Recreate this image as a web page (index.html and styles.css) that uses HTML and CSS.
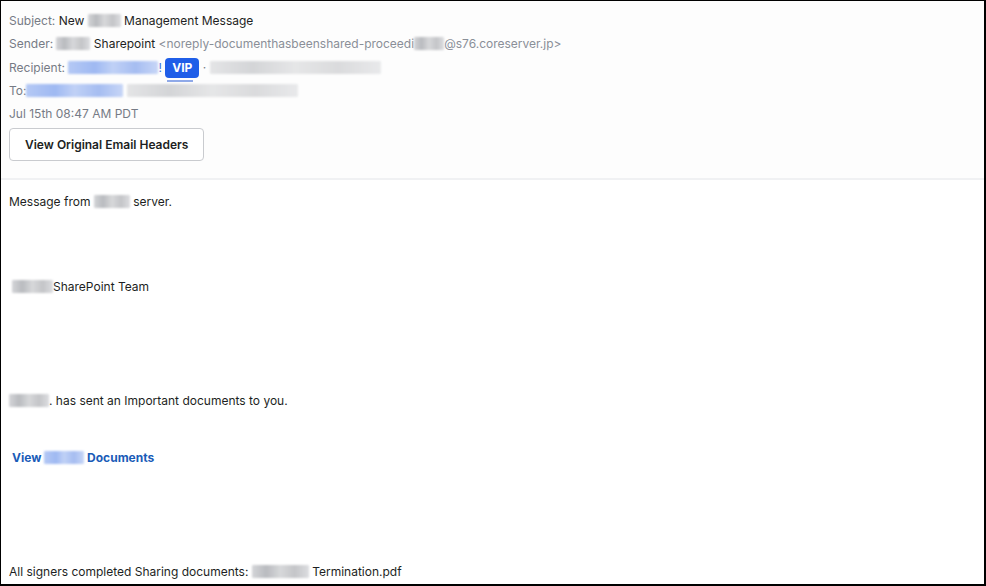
FILE: index.html
```html
<!DOCTYPE html>
<html>
<head>
<meta charset="utf-8">
<link rel="stylesheet" href="styles.css">
</head>
<body>
<div class="frame">
  <header class="head">
    <div class="row"><span class="lbl">Subject:</span> <span class="val">New</span> <span class="blur g w33"></span> <span class="val">Management Message</span></div>
    <div class="row"><span class="lbl">Sender:</span> <span class="blur g w34"></span> <span class="val">Sharepoint</span> <span class="addr">&lt;noreply-documenthasbeenshared-proceedi<span class="blur g w30 tight"></span>@s76.coreserver.jp&gt;</span></div>
    <div class="row"><span class="lbl">Recipient:</span> <span class="blur b w90"></span><span class="bang">!</span> <span class="vip">VIP</span> <span class="lbl">·</span> <span class="blur g w171"></span></div>
    <div class="row"><span class="lbl">To:</span><span class="blur b w97"></span> <span class="blur g w171"></span></div>
    <div class="row"><span class="lbl">Jul 15th 08:47 AM PDT</span></div>
    <button class="btn">View Original Email Headers</button>
  </header>
  <main class="body">
    <div class="line">Message from <span class="blur g w36"></span> server.</div>
    <div class="line s3 ind"><span class="blur g w41 tight"></span>SharePoint Team</div>
    <div class="line s4"><span class="blur g w40 tight"></span>. has sent an Important documents to you.</div>
    <div class="line s2 ind"><a class="link">View <span class="blur b w40 tight"></span> Documents</a></div>
    <div class="line s4">All signers completed Sharing documents: <span class="blur g w57"></span> Termination.pdf</div>
  </main>
</div>
</body>
</html>
```

FILE: styles.css
```css
* { box-sizing: border-box; }
html, body { margin: 0; padding: 0; }
body {
  width: 986px;
  height: 586px;
  font-family: Inter, "Noto Sans", sans-serif;
  font-size: 12px;
  color: #1d1f23;
  background: #fff;
  overflow: hidden;
}
.frame {
  width: 986px;
  height: 586px;
  border-top: 1px solid #000;
  border-left: 1px solid #000;
  border-right: 2px solid #000;
  border-bottom: 2px solid #000;
  display: flex;
  flex-direction: column;
}
.head {
  background: #fdfdfd;
  padding: 8px 8px 17px;
  border-bottom: 2px solid #f0f1f3;
}
.row {
  height: 23.3px;
  line-height: 23.3px;
  white-space: nowrap;
}
.lbl { color: #767b85; }
.val { color: #1d1f23; }
.addr { color: #8a8f98; }
.bang { color: #3b6fe0; }
.blur {
  display: inline-block;
  height: 13px;
  vertical-align: -2px;
  filter: blur(1.2px);
  border-radius: 1px;
}
.blur.tight { margin: 0; }
.g { background: linear-gradient(90deg, #d4d5d8 0%, #b9bbbf 25%, #d7d8da 50%, #c4c5c8 75%, #dcdde0 100%); }
.b { background: linear-gradient(90deg, #b5c9f5 0%, #9fb9f2 30%, #c0d1f6 50%, #a6bdf1 75%, #c7d6f7 100%); }
.w30 { width: 30px; }
.w33 { width: 33px; }
.w34 { width: 34px; }
.w36 { width: 36px; }
.w40 { width: 40px; }
.w41 { width: 41px; }
.w57 { width: 57px; }
.w90 { width: 90px; }
.w97 { width: 97px; }
.w171 { width: 171px; opacity: 0.6; }
.vip {
  display: inline-block;
  position: relative;
  background: #1f5ee8;
  color: #fff;
  font-weight: 700;
  font-size: 12px;
  line-height: 20px;
  padding: 0 7px;
  border-radius: 4px;
  vertical-align: 0;
}
.vip::after {
  content: "";
  position: absolute;
  left: 2px;
  right: 6px;
  bottom: -4px;
  height: 2px;
  background: #8fa9e8;
  filter: blur(0.5px);
}
.btn {
  display: block;
  margin-top: 3px;
  height: 33px;
  padding: 0 15px;
  font-family: Inter, "Noto Sans", sans-serif;
  font-size: 12px;
  font-weight: 600;
  color: #1d1f23;
  background: #fff;
  border: 1px solid #c9cbcf;
  border-radius: 4px;
}
.body {
  flex: 1;
  background: #fff;
  padding: 12px 8px 0;
}
.line {
  line-height: 20px;
  white-space: nowrap;
}
.s2 { margin-top: 37px; }
.s3 { margin-top: 65px; }
.s4 { margin-top: 94px; }
.ind { padding-left: 3px; }
.link {
  color: #1a5cb8;
  font-weight: 700;
}
```
